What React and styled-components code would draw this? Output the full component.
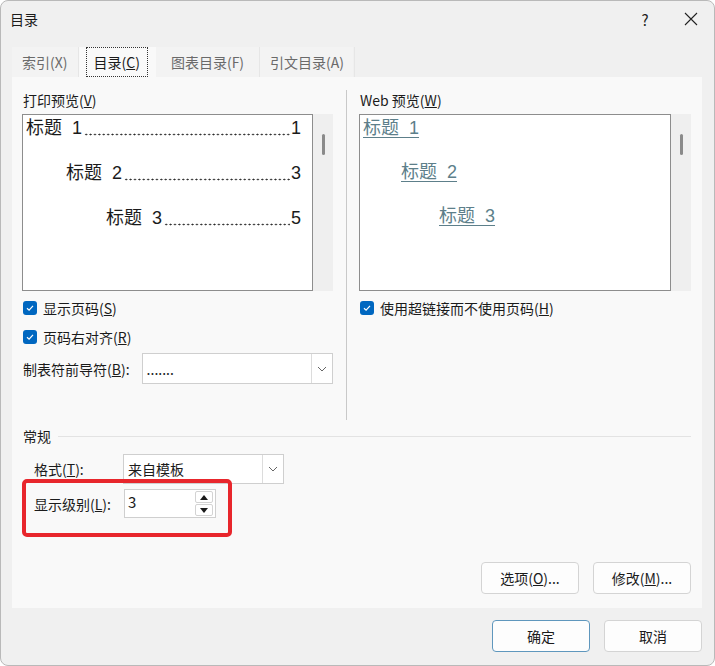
import React from 'react'
import styled, { createGlobalStyle } from 'styled-components'

const GlobalStyle = createGlobalStyle`
  html, body {
    margin: 0;
    padding: 0;
    background: #ffffff;
  }
  body {
    font-family: "Noto Sans CJK SC", "Noto Sans", sans-serif;
    font-size: 14px;
    color: #1b1b1b;
  }
`

const Window = styled.div`
  box-sizing: border-box;
  width: 715px;
  height: 666px;
  background: #f0f0f0;
  border: 1px solid #b9b9b9;
  border-radius: 8px;
  display: flex;
  flex-direction: column;
  overflow: hidden;
`

const TitleBar = styled.div`
  height: 36px;
  display: flex;
  align-items: center;
  padding: 0 0 0 9px;
  font-size: 14px;
`

const Title = styled.div`
  flex: 1;
`

const TitleButton = styled.div`
  width: 46px;
  height: 36px;
  display: flex;
  align-items: center;
  justify-content: center;
  color: #222;
  font-size: 15px;
`

const TabRow = styled.div`
  display: flex;
  height: 30px;
  margin: 10px 0 0 11px;
  background: #f3f3f3;
  width: 341px;
`

const Tab = styled.div`
  display: flex;
  align-items: center;
  padding: 0 ${p => p.$pad || 10}px;
  color: ${p => (p.$active ? '#1b1b1b' : '#6a6a6a')};
  background: ${p => (p.$active ? '#f9f9f9' : 'transparent')};
  border-right: 1px solid ${p => (p.$active ? 'transparent' : '#e6e6e6')};
  white-space: nowrap;

  span {
    padding: 2px ${p => (p.$active ? 5 : 3)}px;
    outline: ${p => (p.$active ? '1px dotted #333' : 'none')};
    outline-offset: 2px;
  }
`

const Panel = styled.div`
  margin: 0 12px 0 11px;
  background: #f9f9f9;
  padding: 13px 11px 14px 10px;
  display: flex;
  flex-direction: column;
`

const TopArea = styled.div`
  display: flex;
`

const Column = styled.div`
  width: ${p => p.$width}px;
  display: flex;
  flex-direction: column;
  padding-bottom: 36px;
`

const Divider = styled.div`
  width: 1px;
  background: #c9c9c9;
  margin: 0 12px 0 13px;
`

const Label = styled.div`
  height: 20px;
  line-height: 20px;
  padding-left: 1px;
  white-space: nowrap;
`

const PreviewWrap = styled.div`
  display: flex;
  margin-top: 4px;
  height: 177px;
`

const PreviewBox = styled.div`
  box-sizing: border-box;
  flex: 1;
  min-width: 0;
  background: #ffffff;
  border: 1px solid #8d8d8d;
  padding: 2px 11px 0 3px;
  display: flex;
  flex-direction: column;
  gap: ${p => p.$gap}px;
  font-family: "Liberation Sans", "Noto Sans CJK SC", sans-serif;
  font-size: 18px;
`

const TocLine = styled.div`
  display: flex;
  align-items: center;
  height: 22px;
  line-height: 22px;
  padding-left: ${p => p.$indent}px;
  white-space: nowrap;
`

const Leader = styled.span`
  flex: 1;
  align-self: stretch;
  margin: 0 1px 0 2px;
  background-image: radial-gradient(circle, #2a2a2a 0.8px, transparent 1.1px);
  background-size: 4.4px 3px;
  background-repeat: repeat-x;
  background-position: 0 calc(100% - 3px);
`

const LinkLine = styled.div`
  height: 22px;
  line-height: 22px;
  padding-left: ${p => p.$indent}px;
  color: #5d7f8a;
  text-decoration: underline;
  text-underline-offset: 3px;
  white-space: pre;
`

const ScrollTrack = styled.div`
  width: 20px;
  flex-shrink: 0;
  background: #efefef;
  display: flex;
  justify-content: center;
  padding-top: 20px;
`

const ScrollThumb = styled.div`
  width: 3px;
  height: 21px;
  border-radius: 2px;
  background: #8a8a8a;
`

const CheckRow = styled.div`
  display: flex;
  align-items: center;
  gap: 6px;
  height: 14px;
  margin-top: ${p => p.$mt}px;
  padding-left: 1px;
  white-space: nowrap;
`

const CheckBox = styled.div`
  width: 14px;
  height: 14px;
  border-radius: 3px;
  background: #0067c0;
  display: flex;
  align-items: center;
  justify-content: center;
`

const FieldRow = styled.div`
  display: flex;
  align-items: center;
  margin-top: ${p => p.$mt}px;
  padding-left: ${p => p.$pl ?? 1}px;
  white-space: nowrap;
`

const FieldLabel = styled.div`
  width: ${p => p.$width}px;
`

const Combo = styled.div`
  box-sizing: border-box;
  width: ${p => p.$width}px;
  height: ${p => p.$height}px;
  background: #ffffff;
  border: 1px solid #cfcfcf;
  display: flex;
  align-items: stretch;
`

const ComboText = styled.div`
  flex: 1;
  display: flex;
  align-items: center;
  padding-left: 4px;
`

const ComboArrow = styled.div`
  width: 20px;
  border-left: 1px solid #dcdcdc;
  display: flex;
  align-items: center;
  justify-content: center;
`

const GeneralHeader = styled.div`
  display: flex;
  align-items: center;
  height: 20px;
  margin-top: 6px;
  padding-left: 1px;
  gap: 7px;

  &::after {
    content: '';
    flex: 1;
    height: 1px;
    background: #e3e3e3;
  }
`

const GeneralArea = styled.div`
  position: relative;
  padding-left: 12px;
`

const Highlight = styled.div`
  position: absolute;
  left: 0;
  top: 33px;
  width: 210px;
  height: 58px;
  box-sizing: border-box;
  border: 4px solid #e8262c;
  border-radius: 5px;
`

const Spin = styled.div`
  box-sizing: border-box;
  width: 92px;
  height: 29px;
  margin-left: 1px;
  background: #ffffff;
  border: 1px solid #cfcfcf;
  display: flex;
  align-items: stretch;
  padding: 1px 2px 1px 0;
`

const SpinText = styled.div`
  flex: 1;
  padding: 1px 0 0 3px;
  font-size: 15px;
  line-height: 20px;
`

const SpinButtons = styled.div`
  width: 18px;
  display: flex;
  flex-direction: column;
  gap: 1px;
`

const SpinButton = styled.div`
  flex: 1;
  border: 1px solid #d3d3d3;
  border-radius: 2px;
  display: flex;
  align-items: center;
  justify-content: center;
`

const ButtonRow = styled.div`
  display: flex;
  justify-content: flex-end;
  gap: ${p => p.$gap}px;
  margin-top: ${p => p.$mt || 0}px;
`

const Button = styled.div`
  box-sizing: border-box;
  width: 98px;
  height: 32px;
  display: flex;
  align-items: center;
  justify-content: center;
  background: #fdfdfd;
  border: 1px solid ${p => (p.$primary ? '#5f97bd' : '#d4d4d4')};
  border-radius: 4px;
  white-space: nowrap;
`

const Footer = styled.div`
  padding: 12px 12px 0 0;
`

const Check = () => (
  <CheckBox>
    <svg width="10" height="10" viewBox="0 0 10 10">
      <path d="M2 5.2 L4.1 7.2 L8 2.9" fill="none" stroke="#fff" strokeWidth="1.2" />
    </svg>
  </CheckBox>
)

const Chevron = () => (
  <svg width="10" height="6" viewBox="0 0 10 6">
    <path d="M1 1 L5 5 L9 1" fill="none" stroke="#666" strokeWidth="1" />
  </svg>
)

const Triangle = ({ up }) => (
  <svg width="8" height="5" viewBox="0 0 8 5">
    <path d={up ? 'M0 5 L4 0 L8 5 Z' : 'M0 0 L4 5 L8 0 Z'} fill="#1a1a1a" />
  </svg>
)

const tocItems = [
  { name: '标题 1', page: 1, indent: 0 },
  { name: '标题 2', page: 3, indent: 40 },
  { name: '标题 3', page: 5, indent: 80 },
]

const App = () => {
  return (
    <>
      <GlobalStyle />
      <Window>
        <TitleBar>
          <Title>目录</Title>
          <TitleButton>?</TitleButton>
          <TitleButton>
            <svg width="14" height="14" viewBox="0 0 14 14">
              <path d="M1 1 L13 13 M13 1 L1 13" stroke="#222" strokeWidth="1.1" />
            </svg>
          </TitleButton>
        </TitleBar>

        <TabRow>
          <Tab $pad={7}><span>索引(X)</span></Tab>
          <Tab $active $pad={0}><span>目录(<u>C</u>)</span></Tab>
          <Tab $pad={12}><span>图表目录(F)</span></Tab>
          <Tab $pad={7}><span>引文目录(A)</span></Tab>
        </TabRow>

        <Panel>
          <TopArea>
            <Column $width={311}>
              <Label>打印预览(<u>V</u>)</Label>
              <PreviewWrap>
                <PreviewBox $gap={23}>
                  {tocItems.map(item => (
                    <TocLine key={item.name} $indent={item.indent}>
                      <span>{item.name.replace(' ', '\u00a0\u00a0')}</span>
                      <Leader />
                      <span>{item.page}</span>
                    </TocLine>
                  ))}
                </PreviewBox>
                <ScrollTrack><ScrollThumb /></ScrollTrack>
              </PreviewWrap>
              <CheckRow $mt={10}>
                <Check />
                <span>显示页码(<u>S</u>)</span>
              </CheckRow>
              <CheckRow $mt={15}>
                <Check />
                <span>页码右对齐(<u>R</u>)</span>
              </CheckRow>
              <FieldRow $mt={9}>
                <FieldLabel $width={119}>制表符前导符(<u>B</u>):</FieldLabel>
                <Combo $width={192} $height={31}>
                  <ComboText>.......</ComboText>
                  <ComboArrow><Chevron /></ComboArrow>
                </Combo>
              </FieldRow>
            </Column>

            <Divider />

            <Column $width={334}>
              <Label>Web 预览(<u>W</u>)</Label>
              <PreviewWrap>
                <PreviewBox $gap={22}>
                  {tocItems.map((item, i) => (
                    <LinkLine key={item.name} $indent={i * 38}>
                      {item.name.replace(' ', '  ')}
                    </LinkLine>
                  ))}
                </PreviewBox>
                <ScrollTrack><ScrollThumb /></ScrollTrack>
              </PreviewWrap>
              <CheckRow $mt={10}>
                <Check />
                <span>使用超链接而不使用页码(<u>H</u>)</span>
              </CheckRow>
            </Column>
          </TopArea>

          <GeneralHeader>常规</GeneralHeader>
          <GeneralArea>
            <FieldRow $mt={8} $pl={0}>
              <FieldLabel $width={89}>格式(<u>T</u>):</FieldLabel>
              <Combo $width={161} $height={30}>
                <ComboText>来自模板</ComboText>
                <ComboArrow><Chevron /></ComboArrow>
              </Combo>
            </FieldRow>
            <FieldRow $mt={5} $pl={0}>
              <FieldLabel $width={89}>显示级别(<u>L</u>):</FieldLabel>
              <Spin>
                <SpinText>3</SpinText>
                <SpinButtons>
                  <SpinButton><Triangle up /></SpinButton>
                  <SpinButton><Triangle /></SpinButton>
                </SpinButtons>
              </Spin>
            </FieldRow>
            <Highlight />
          </GeneralArea>

          <ButtonRow $gap={14} $mt={44}>
            <Button>选项(<u>O</u>)...</Button>
            <Button>修改(<u>M</u>)...</Button>
          </ButtonRow>
        </Panel>

        <Footer>
          <ButtonRow $gap={14}>
            <Button $primary>确定</Button>
            <Button>取消</Button>
          </ButtonRow>
        </Footer>
      </Window>
    </>
  )
}

export default App
